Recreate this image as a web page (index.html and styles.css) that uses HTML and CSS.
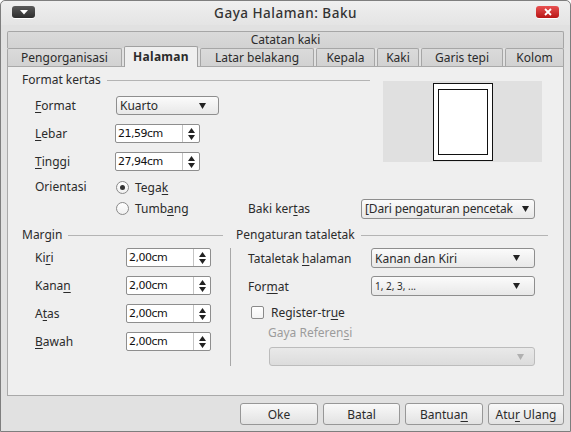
FILE: index.html
```html
<!DOCTYPE html>
<html lang="id">
<head>
<meta charset="utf-8">
<title>Gaya Halaman: Baku</title>
<link rel="stylesheet" href="styles.css">
</head>
<body>
<div class="window">
  <div class="titlebar">
    <div class="tb-btn tb-menu">
      <svg width="8" height="5" viewBox="0 0 8 5"><path d="M0 0H8L4 4.5Z" fill="#fff"/></svg>
    </div>
    <div class="title">Gaya Halaman: Baku</div>
    <div class="tb-btn tb-close">
      <svg width="8" height="8" viewBox="0 0 8 8"><path d="M1 1L7 7M7 1L1 7" stroke="#fff" stroke-width="1.8"/></svg>
    </div>
  </div>

  <div class="tabs">
    <div class="tabrow">
      <div class="tab tab-full">Catatan kaki</div>
    </div>
    <div class="tabrow">
      <div class="tab t-peng">Pengorganisasi</div>
      <div class="tab tab-active t-hal">Halaman</div>
      <div class="tab t-latar">Latar belakang</div>
      <div class="tab t-kepala">Kepala</div>
      <div class="tab t-kaki">Kaki</div>
      <div class="tab t-garis">Garis tepi</div>
      <div class="tab t-kolom">Kolom</div>
    </div>
  </div>

  <div class="panel">
    <div class="top">
      <div class="top-left">
        <div class="legend legend-top">Format kertas</div>
        <div class="frow">
          <span class="flabel"><u>F</u>ormat</span>
          <div class="combo combo-kuarto"><span>Kuarto</span><svg class="arrow" width="7" height="6" viewBox="0 0 7 6"><path d="M0 0H7L3.5 6Z" fill="#222"/></svg></div>
        </div>
        <div class="frow">
          <span class="flabel"><u>L</u>ebar</span>
          <div class="spin"><span class="val">21,59cm</span><span class="spin-btn"><svg width="7" height="12" viewBox="0 0 7 12"><path d="M0 5H7L3.5 0Z M0 7H7L3.5 12Z" fill="#222"/></svg></span></div>
        </div>
        <div class="frow">
          <span class="flabel"><u>T</u>inggi</span>
          <div class="spin"><span class="val">27,94cm</span><span class="spin-btn"><svg width="7" height="12" viewBox="0 0 7 12"><path d="M0 5H7L3.5 0Z M0 7H7L3.5 12Z" fill="#222"/></svg></span></div>
        </div>
      </div>
      <div class="preview">
        <div class="page"><div class="page-inner"></div></div>
      </div>
    </div>

    <div class="orient">
      <span class="flabel">Orientasi</span>
      <label class="radio"><span class="rdot checked"></span>Tega<u>k</u></label>
      <span></span><span></span>
      <span></span>
      <label class="radio"><span class="rdot"></span>Tumb<u>a</u>ng</label>
      <span class="baki">Baki ker<u>t</u>as</span>
      <div class="combo combo-baki"><span class="clip">[Dari pengaturan pencetak</span><svg class="arrow" width="7" height="6" viewBox="0 0 7 6"><path d="M0 0H7L3.5 6Z" fill="#222"/></svg></div>
    </div>

    <div class="bottom">
      <div class="margin-col">
        <div class="legend">Margin</div>
        <div class="mrow first">
          <span class="mlabel">Ki<u>r</u>i</span>
          <div class="spin"><span class="val">2,00cm</span><span class="spin-btn"><svg width="7" height="12" viewBox="0 0 7 12"><path d="M0 5H7L3.5 0Z M0 7H7L3.5 12Z" fill="#222"/></svg></span></div>
        </div>
        <div class="mrow">
          <span class="mlabel">Kana<u>n</u></span>
          <div class="spin"><span class="val">2,00cm</span><span class="spin-btn"><svg width="7" height="12" viewBox="0 0 7 12"><path d="M0 5H7L3.5 0Z M0 7H7L3.5 12Z" fill="#222"/></svg></span></div>
        </div>
        <div class="mrow">
          <span class="mlabel">A<u>t</u>as</span>
          <div class="spin"><span class="val">2,00cm</span><span class="spin-btn"><svg width="7" height="12" viewBox="0 0 7 12"><path d="M0 5H7L3.5 0Z M0 7H7L3.5 12Z" fill="#222"/></svg></span></div>
        </div>
        <div class="mrow">
          <span class="mlabel"><u>B</u>awah</span>
          <div class="spin"><span class="val">2,00cm</span><span class="spin-btn"><svg width="7" height="12" viewBox="0 0 7 12"><path d="M0 5H7L3.5 0Z M0 7H7L3.5 12Z" fill="#222"/></svg></span></div>
        </div>
      </div>
      <div class="vsep"></div>
      <div class="layout-col">
        <div class="legend">Pengaturan tataletak</div>
        <div class="lrow first">
          <span class="llabel">Tataletak <u>h</u>alaman</span>
          <div class="combo combo-wide"><span>Kanan dan Kiri</span><svg class="arrow" width="7" height="6" viewBox="0 0 7 6"><path d="M0 0H7L3.5 6Z" fill="#222"/></svg></div>
        </div>
        <div class="lrow">
          <span class="llabel">For<u>m</u>at</span>
          <div class="combo combo-wide"><span class="small">1, 2, 3, ...</span><svg class="arrow" width="7" height="6" viewBox="0 0 7 6"><path d="M0 0H7L3.5 6Z" fill="#222"/></svg></div>
        </div>
        <label class="check-row"><span class="cbox"></span>Register-tr<u>u</u>e</label>
        <div class="ref-label">Gaya Referen<u>s</u>i</div>
        <div class="combo combo-disabled"><span></span><svg class="arrow" width="7" height="6" viewBox="0 0 7 6"><path d="M0 0H7L3.5 6Z" fill="#b0b0b0"/></svg></div>
      </div>
    </div>
  </div>

  <div class="buttons">
    <button class="btn btn-oke">Oke</button>
    <button class="btn btn-batal">Batal</button>
    <button class="btn btn-bantuan">Bantua<u>n</u></button>
    <button class="btn btn-atur">Atu<u>r</u> Ulang</button>
  </div>
</div>
</body>
</html>
```

FILE: styles.css
```css
* { box-sizing: border-box; }

html, body {
  margin: 0;
  padding: 0;
  background: #ffffff;
}

body {
  font-family: "Noto Sans", "DejaVu Sans", sans-serif;
  font-size: 12px;
  color: #2b2b2b;
}

u { text-decoration: underline; text-underline-offset: 2px; }

.window {
  width: 571px;
  height: 432px;
  border: 1px solid #7e7e7e;
  border-radius: 5px 5px 0 0;
  background: #e1e1e1;
  padding: 0 6px;
  display: flex;
  flex-direction: column;
}

/* title bar */
.titlebar {
  height: 24px;
  margin: 0 -6px;
  padding: 0 11px;
  display: flex;
  align-items: center;
  background: linear-gradient(#efefef, #e4e4e4);
  border-radius: 5px 5px 0 0;
}
.title {
  flex: 1;
  text-align: center;
  font-size: 13.5px;
  font-weight: 500;
  color: #333;
  letter-spacing: 0.5px;
}
.tb-btn {
  width: 23px;
  height: 12px;
  border-radius: 3px;
  display: flex;
  align-items: center;
  justify-content: center;
  margin-top: -2px;
}
.tb-menu {
  background: linear-gradient(#5a5a5a, #2e2e2e);
  box-shadow: 0 1px 0 #fff;
}
.tb-close {
  background: linear-gradient(#e85050, #b81515);
  box-shadow: 0 1px 0 #fff;
}

/* tabs */
.tabs {
  margin-top: 6px;
  display: flex;
  flex-direction: column;
}
.tabrow {
  display: flex;
  gap: 2px;
  height: 17px;
}
.tabrow + .tabrow {
  height: 18px;
}
.tab {
  flex: none;
  padding: 0;
  text-align: center;
  line-height: 16px;
  border: 1px solid #a6a6a6;
  border-bottom: none;
  border-radius: 2px 2px 0 0;
  background: linear-gradient(#dadada, #d2d2d2);
  color: #2b2b2b;
  white-space: nowrap;
}
.tab-full { flex: 1; }
.t-peng { width: 115px; }
.t-hal { width: 74px; }
.t-latar { width: 114px; }
.t-kepala { width: 59px; }
.t-kaki { width: 42px; }
.t-garis { width: 82px; }
.t-kolom { flex: 1; }
.tabrow + .tabrow .tab { line-height: 17px; }
.tab-active {
  position: relative;
  margin-top: -2px;
  height: 21px;
  z-index: 2;
  background: #efefef;
  font-weight: bold;
  letter-spacing: 0.3px;
  line-height: 19px !important;
  border-color: #a0a0a0;
}

/* panel */
.panel {
  height: 330px;
  border: 1px solid #a9a9a9;
  background: #efefef;
  padding: 6px 0 0 14px;
  position: relative;
  z-index: 1;
}

.legend {
  display: flex;
  align-items: center;
  height: 14px;
  line-height: 14px;
  white-space: nowrap;
}
.legend::after {
  content: "";
  flex: 1;
  height: 1px;
  background: #b4b4b4;
  margin-left: 6px;
  margin-top: 1px;
}

.top {
  display: flex;
  align-items: flex-start;
}
.top-left {
  width: 348px;
}
.frow {
  display: flex;
  align-items: center;
  height: 19px;
  margin-top: 9px;
}
.flabel {
  width: 93px;
  padding-left: 13px;
  flex: none;
}

.preview {
  margin-left: 13px;
  margin-top: 8px;
  width: 159px;
  height: 81px;
  background: #e0e0e0;
  display: flex;
  justify-content: center;
  padding-top: 2px;
}
.page {
  width: 60px;
  height: 78px;
  background: #fff;
  border: 1px solid #111;
  padding: 5px 4px 5px 4px;
}
.page-inner {
  width: 100%;
  height: 100%;
  border: 1px solid #111;
}

/* combos */
.combo {
  height: 19px;
  border: 1px solid #8e8e8e;
  border-radius: 3px;
  background: linear-gradient(#fbfbfb, #e8e8e8);
  display: flex;
  align-items: center;
  padding: 0 9px 0 3px;
  font-size: 12px;
}
.combo > span {
  flex: 1;
  white-space: nowrap;
  overflow: hidden;
}
.combo .arrow { flex: none; margin-left: 4px; }
.combo-kuarto { width: 103px; margin-left: 1px; }
.combo-kuarto .arrow { margin-right: 3px; }
.combo-baki { width: 174px; height: 20px; padding-right: 5px; }
.combo-baki .clip { letter-spacing: -0.15px; }
.combo-wide { width: 164px; height: 20px; padding-right: 14px; }
.small { font-size: 10px; }

/* spin boxes */
.spin {
  width: 85px;
  height: 19px;
  border: 1px solid #8e8e8e;
  border-radius: 2px;
  background: #fff;
  display: flex;
  align-items: stretch;
}
.spin .val {
  flex: 1;
  padding-left: 2px;
  font-family: "DejaVu Sans", sans-serif;
  font-size: 11px;
  letter-spacing: -0.5px;
  line-height: 17px;
  color: #111;
}
.spin-btn {
  width: 17px;
  border-left: 1px solid #c4c4c4;
  display: flex;
  align-items: center;
  justify-content: center;
}

/* orientation */
.orient {
  margin-top: 6px;
  display: grid;
  grid-template-columns: 93px 133px 113px 174px;
  grid-template-rows: 21px 21px;
  align-items: center;
}
.orient .flabel { align-self: start; padding-top: 1px; }
.radio {
  display: flex;
  align-items: center;
}
.rdot {
  width: 13px;
  height: 13px;
  border-radius: 50%;
  border: 1px solid #8a8a8a;
  background: linear-gradient(#ffffff, #f0f0f0);
  margin-left: 1px;
  margin-right: 6px;
  display: flex;
  align-items: center;
  justify-content: center;
}
.rdot.checked::after {
  content: "";
  width: 5px;
  height: 5px;
  border-radius: 50%;
  background: #333;
}

/* bottom section */
.bottom {
  margin-top: 9px;
  display: flex;
  align-items: flex-start;
}
.margin-col { width: 201px; }
.mrow {
  display: flex;
  align-items: center;
  height: 19px;
  margin-top: 9px;
}
.mrow.first { margin-top: 6px; }
.mlabel {
  width: 104px;
  padding-left: 13px;
  flex: none;
}
.vsep {
  width: 1px;
  height: 118px;
  margin-left: 7px;
  margin-top: 20px;
  background: #a8a8a8;
}
.layout-col {
  width: 312px;
  margin-left: 5px;
}
.lrow {
  display: flex;
  align-items: center;
  height: 20px;
  margin-top: 8px;
}
.lrow.first { margin-top: 6px; }
.llabel {
  width: 135px;
  padding-left: 12px;
  flex: none;
}
.check-row {
  display: flex;
  align-items: center;
  height: 16px;
  margin-top: 8px;
  padding-left: 15px;
}
.cbox {
  width: 13px;
  height: 13px;
  border: 1px solid #8a8a8a;
  border-radius: 2px;
  background: linear-gradient(#ffffff, #f3f3f3);
  margin-right: 7px;
}
.ref-label {
  height: 14px;
  line-height: 14px;
  margin-top: 6px;
  padding-left: 32px;
  color: #9c9c9c;
}
.combo-disabled {
  width: 266px;
  height: 19px;
  margin-left: 33px;
  margin-top: 7px;
  border-color: #bcbcbc;
  background: linear-gradient(#e9e9e9, #dcdcdc);
  padding-right: 10px;
}

/* buttons */
.buttons {
  display: flex;
  justify-content: flex-end;
  gap: 5px;
  margin-top: 7px;
}
.btn {
  height: 22px;
  border: 1px solid #979797;
  border-radius: 3px;
  background: linear-gradient(#f9f9f9, #e2e2e2);
  font-family: "Noto Sans", "DejaVu Sans", sans-serif;
  font-size: 12px;
  color: #2b2b2b;
  padding: 0;
}
.btn-oke { width: 78px; }
.btn-batal { width: 77px; }
.btn-bantuan { width: 78px; }
.btn-atur { width: 76px; }
```
